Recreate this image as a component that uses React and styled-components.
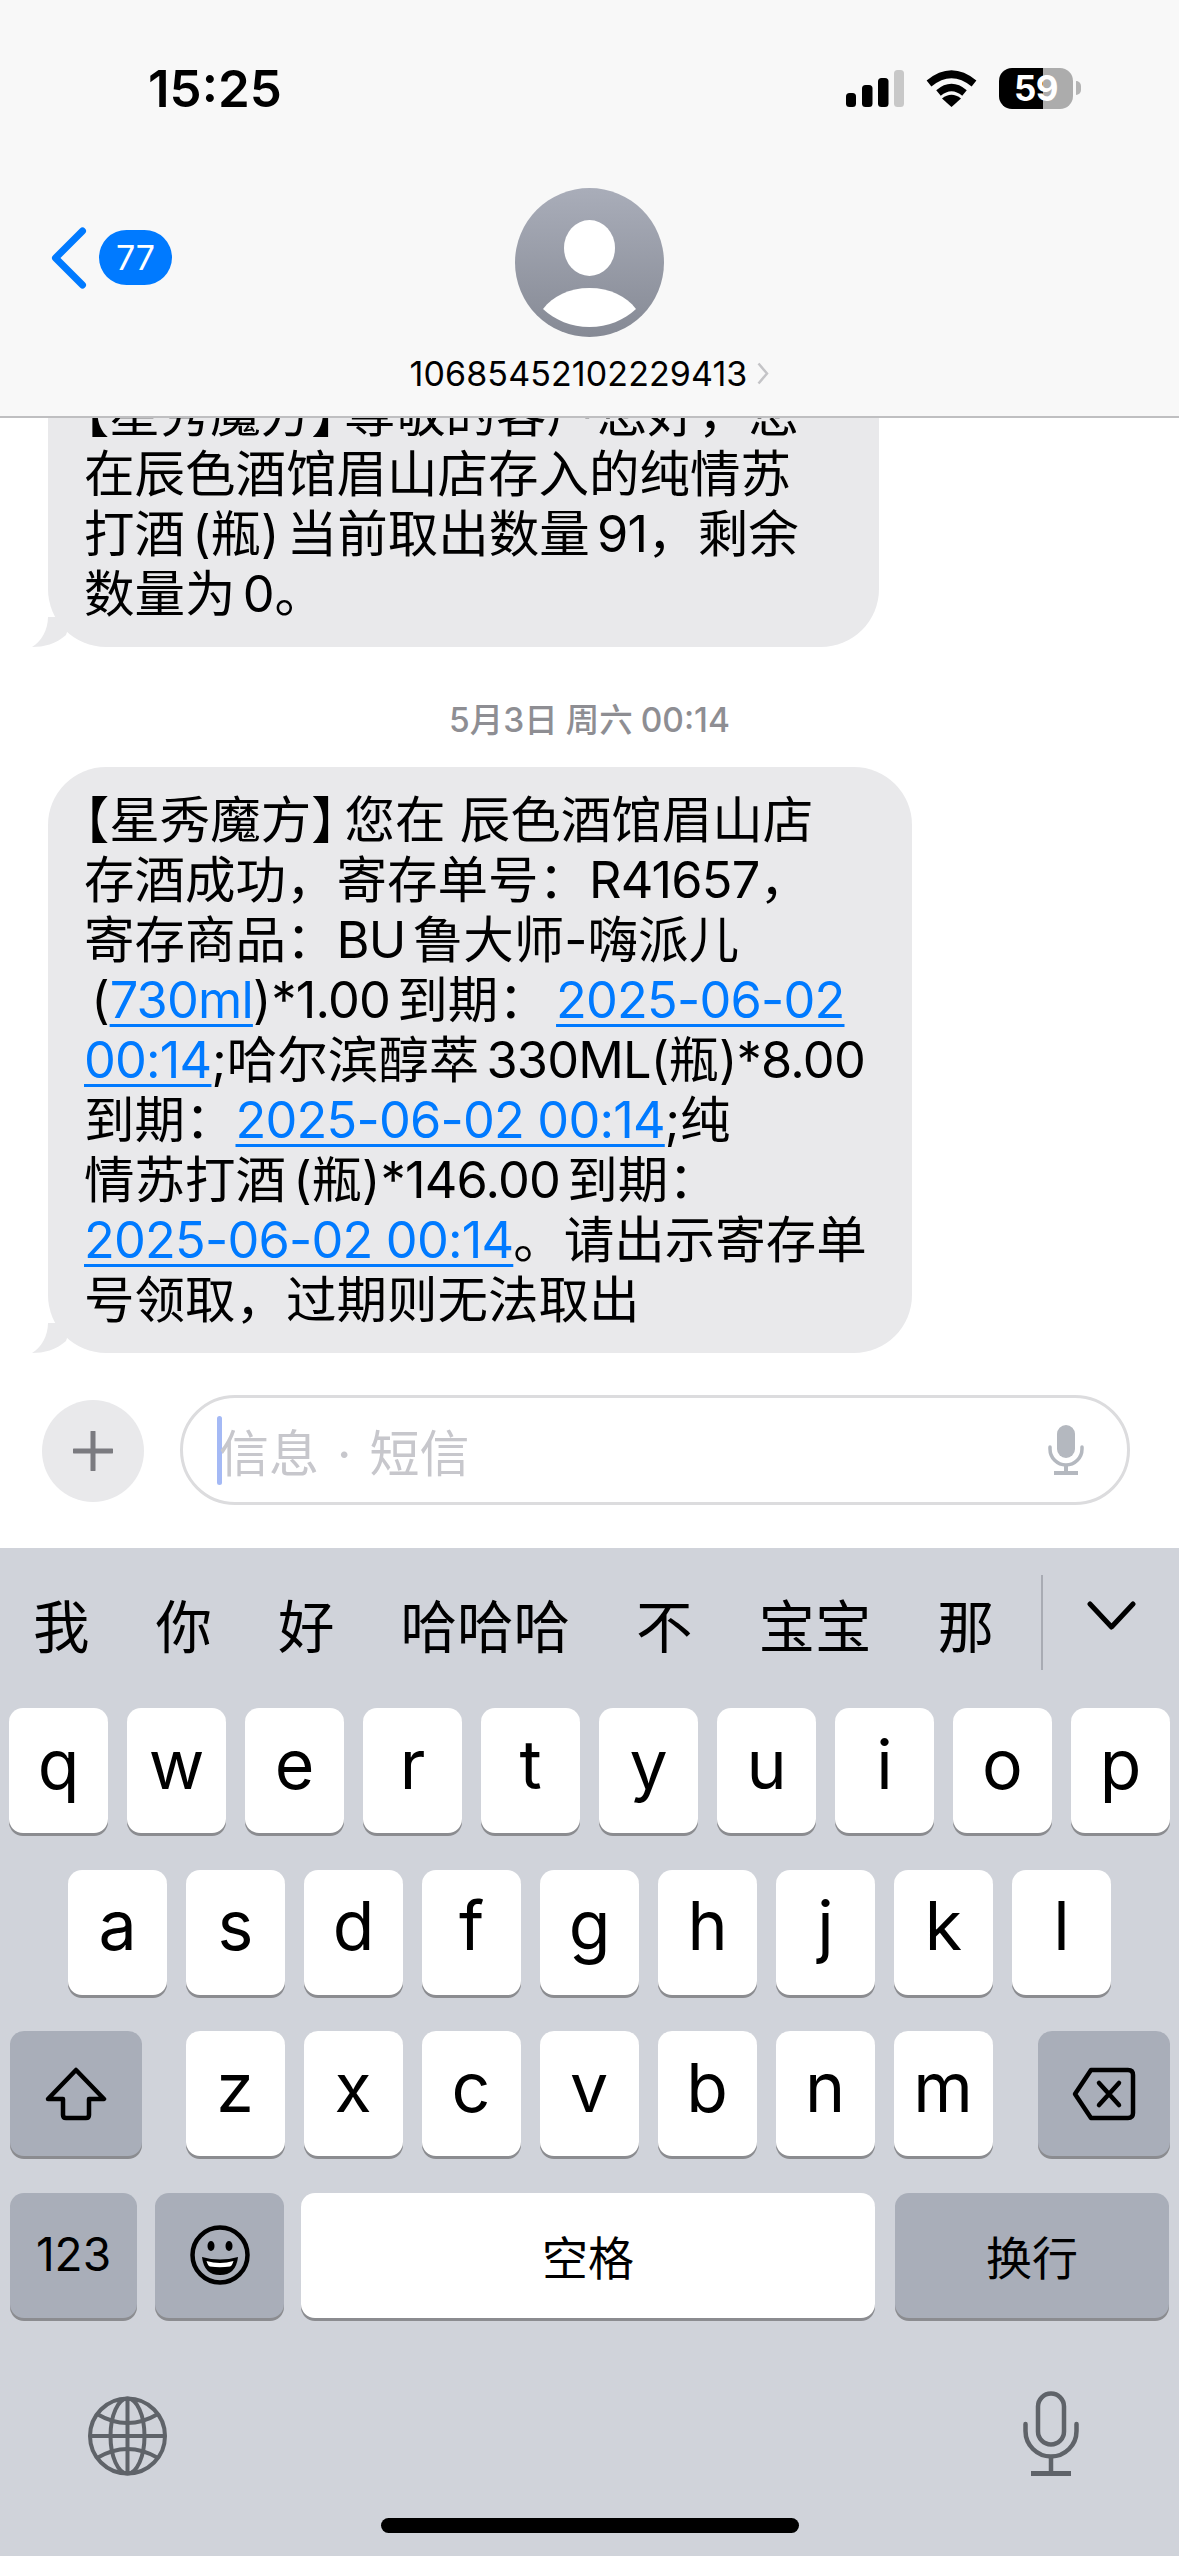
import React from 'react';
import styled, { createGlobalStyle } from 'styled-components';

const TEXT_FONT = `Inter, "Noto Sans CJK SC", sans-serif`;

const GlobalStyle = createGlobalStyle`
  html, body {
    margin: 0;
    padding: 0;
    background: #fff;
  }
  * {
    box-sizing: border-box;
  }
`;

const Page = styled.div`
  width: 1179px;
  height: 2556px;
  display: flex;
  flex-direction: column;
  overflow: hidden;
  background: #fff;
  color: #000;
  font-family: ${TEXT_FONT};
`;

const Header = styled.header`
  flex: none;
  height: 418px;
  background: #f8f8f8;
  border-bottom: 2px solid #bfbfc1;
`;

const StatusBar = styled.div`
  height: 176px;
  padding: 0 98px 0 148px;
  display: flex;
  align-items: center;
  justify-content: space-between;
`;

const Clock = styled.div`
  font-size: 51px;
  font-weight: 600;
`;

const StatusIcons = styled.div`
  display: flex;
  align-items: center;
  gap: 22px;
`;

const Battery = styled.div`
  display: flex;
  align-items: center;
`;

const BatteryBody = styled.div`
  width: 74px;
  height: 41px;
  border-radius: 13px;
  background: ${(p) => `linear-gradient(90deg, #000 ${p.$level}%, #acacac ${p.$level}%)`};
  color: #fff;
  font-size: 35px;
  font-weight: 700;
  line-height: 41px;
  text-align: center;
  letter-spacing: -0.5px;
`;

const BatteryNub = styled.div`
  width: 5px;
  height: 14px;
  margin-left: 3px;
  border-radius: 0 8px 8px 0;
  background: #b4b4b4;
`;

const Nav = styled.div`
  margin-top: 12px;
  display: grid;
  grid-template-columns: 1fr auto 1fr;
`;

const Back = styled.div`
  padding: 39px 0 0 51px;
  display: flex;
  align-items: flex-start;
  gap: 12px;
`;

const Badge = styled.div`
  width: 73px;
  height: 55px;
  margin-top: 3px;
  border-radius: 28px;
  background: #007aff;
  color: #fff;
  font-size: 34px;
  line-height: 55px;
  text-align: center;
`;

const Contact = styled.div`
  display: flex;
  flex-direction: column;
  align-items: center;
`;

const ContactName = styled.div`
  margin-top: 16px;
  height: 40px;
  display: flex;
  align-items: center;
  gap: 10px;
  font-size: 34px;
  letter-spacing: 0.1px;
`;

const Messages = styled.main`
  flex: 1;
  min-height: 0;
  overflow: hidden;
  display: flex;
  flex-direction: column;
  justify-content: flex-end;
  padding-left: 48px;
`;

const Bubble = styled.div`
  position: relative;
  flex: none;
  width: ${(p) => p.$width}px;
  padding: 23px 0 23px 36px;
  border-radius: 58px;
  background: #e9e9eb;
  font-size: 50.5px;
  line-height: 60px;
  white-space: nowrap;
  word-spacing: -7px;
`;

const Tail = styled.svg`
  position: absolute;
  left: -16px;
  bottom: 0;
  width: 40px;
  height: 30px;
`;

const Bracket = styled.span`
  font-feature-settings: 'halt';
  margin-right: ${(p) => p.$after || 0}px;
`;

const Latin = styled.span`
  letter-spacing: -0.8px;
`;

const Wide = styled.span`
  word-spacing: 0;
`;

const Link = styled.span`
  color: #007aff;
  letter-spacing: -0.8px;
  word-spacing: 0;
  text-decoration: underline;
  text-decoration-thickness: 3px;
  text-underline-offset: 6px;
`;

const Timestamp = styled.div`
  flex: none;
  height: 40px;
  margin: 53px 48px 27px 0;
  color: #8e8e93;
  font-size: 33.5px;
  font-weight: 500;
  line-height: 40px;
  text-align: center;
  word-spacing: -1px;
`;

const Composer = styled.div`
  flex: none;
  height: 195px;
  padding: 42px 49px 0 42px;
  display: flex;
  gap: 36px;
`;

const PlusButton = styled.div`
  flex: none;
  width: 102px;
  height: 102px;
  margin-top: 5px;
  border-radius: 50%;
  background: #e9e9eb;
  display: flex;
  align-items: center;
  justify-content: center;
`;

const InputBox = styled.div`
  flex: 1;
  height: 110px;
  padding: 0 43px 0 34px;
  border: 3px solid #dcdcde;
  border-radius: 55px;
  display: flex;
  align-items: center;
`;

const Caret = styled.div`
  flex: none;
  width: 5px;
  height: 69px;
  margin-right: -3px;
  border-radius: 3px;
  background: #a4b9f5;
`;

const Placeholder = styled.div`
  flex: 1;
  color: #c7c7cc;
  font-size: 50px;
  white-space: nowrap;
  word-spacing: 4px;
`;

const Keyboard = styled.section`
  flex: none;
  height: 1008px;
  background: #d0d3da;
`;

const Candidates = styled.div`
  position: relative;
  height: 160px;
  padding: 49px 0 0 33px;
  display: flex;
  gap: 66px;
  font-size: 56.5px;
  line-height: 62px;
  white-space: nowrap;
`;

const CandidateDivider = styled.div`
  position: absolute;
  left: 1041px;
  top: 27px;
  width: 2px;
  height: 95px;
  background: #a8abb3;
`;

const CandidateToggle = styled.svg`
  position: absolute;
  left: 1087px;
  top: 53px;
  width: 49px;
  height: 30px;
`;

const KeyRows = styled.div`
  display: flex;
  flex-direction: column;
  gap: 36.5px;
`;

const KeyRow = styled.div`
  height: 125px;
  display: flex;
  justify-content: center;
  gap: ${(p) => p.$gap || 19}px;
`;

const Key = styled.div`
  flex: none;
  width: ${(p) => p.$width || 99}px;
  height: 125px;
  margin: ${(p) => p.$margin || 0};
  border-radius: 14px;
  background: ${(p) => (p.$special ? '#a9aeb9' : '#fff')};
  box-shadow: 0 3px 0 #8b8c90;
  display: flex;
  align-items: center;
  justify-content: center;
  font-size: ${(p) => p.$size || 68}px;
  padding-bottom: ${(p) => p.$lift ?? 14}px;
`;

const KeyboardFooter = styled.div`
  margin-top: 73px;
  height: 85px;
  padding: 0 100px 0 88px;
  display: flex;
  align-items: flex-end;
  justify-content: space-between;
`;

const HomeBar = styled.div`
  width: 418px;
  height: 15px;
  margin: 42px auto 0;
  border-radius: 8px;
  background: #000;
`;

const SignalIcon = () => (
  <svg width="58" height="37" viewBox="0 0 58 37">
    <rect x="0" y="23" width="10" height="14" rx="3.5" fill="#000" />
    <rect x="16" y="15" width="10.5" height="22" rx="3.5" fill="#000" />
    <rect x="32" y="8" width="10.5" height="29" rx="3.5" fill="#000" />
    <rect x="48" y="0" width="10" height="37" rx="3.5" fill="#c8c8c8" />
  </svg>
);

const WifiIcon = () => (
  <svg width="51" height="37" viewBox="0 0 51 37">
    <path d="M3 13.5 Q25.5 -5 48 13.5" fill="none" stroke="#000" strokeWidth="7.5" />
    <path d="M12.5 23 Q25.5 12 38.5 23" fill="none" stroke="#000" strokeWidth="7" />
    <path d="M25.5 37 L16 28.5 Q25.5 21 35 28.5 Z" fill="#000" />
  </svg>
);

const Avatar = () => (
  <svg width="149" height="149" viewBox="0 0 149 149">
    <defs>
      <linearGradient id="avatarFill" x1="0" y1="0" x2="0" y2="1">
        <stop offset="0" stopColor="#a9adb9" />
        <stop offset="1" stopColor="#868a95" />
      </linearGradient>
    </defs>
    <circle cx="74.5" cy="74.5" r="74.5" fill="url(#avatarFill)" />
    <ellipse cx="74.5" cy="60" rx="25.5" ry="28" fill="#fff" />
    <path d="M28 121 C38 108 54 100 74.5 100 C95 100 111 108 121 121 C109 132 93 139 74.5 139 C56 139 40 132 28 121 Z" fill="#fff" />
  </svg>
);

const BackChevron = () => (
  <svg width="36" height="62" viewBox="0 0 36 62">
    <path d="M31.5 4 L4.5 31 L31.5 58" fill="none" stroke="#007aff" strokeWidth="7" strokeLinecap="round" strokeLinejoin="round" />
  </svg>
);

const NameChevron = () => (
  <svg width="12" height="23" viewBox="0 0 12 23">
    <path d="M1.5 1.5 L10 11.5 L1.5 21.5" fill="none" stroke="#c4c4c7" strokeWidth="2.5" />
  </svg>
);

const BubbleTail = () => (
  <Tail viewBox="0 0 40 30">
    <path d="M16 0 C16 13 9 25 0 30 C12 30 24 27 34 18 L40 0 Z" fill="#e9e9eb" />
  </Tail>
);

const PlusIcon = () => (
  <svg width="40" height="40" viewBox="0 0 40 40">
    <path d="M20 1 V39 M1 20 H39" stroke="#7b7b80" strokeWidth="5" strokeLinecap="round" />
  </svg>
);

const InputMic = () => (
  <svg width="36" height="50" viewBox="0 0 36 50">
    <rect x="9" y="0" width="18" height="33" rx="9" fill="#b4b8bf" />
    <path d="M2 22 V24 A16 16 0 0 0 34 24 V22" fill="none" stroke="#b4b8bf" strokeWidth="3.5" strokeLinecap="round" />
    <path d="M18 40 V47 M6 48 H30" stroke="#b4b8bf" strokeWidth="4" />
  </svg>
);

const ShiftIcon = () => (
  <svg width="62" height="54" viewBox="0 0 62 54">
    <path
      d="M31 3 L59 32 H44 V48 Q44 51 41 51 H21 Q18 51 18 48 V32 H3 Z"
      fill="none"
      stroke="#000"
      strokeWidth="4.5"
      strokeLinejoin="round"
    />
  </svg>
);

const BackspaceIcon = () => (
  <svg width="64" height="54" viewBox="0 0 64 54">
    <path
      d="M19 3 H56 Q61 3 61 8 V46 Q61 51 56 51 H19 L3 27 Z"
      fill="none"
      stroke="#000"
      strokeWidth="4.5"
      strokeLinejoin="round"
    />
    <path d="M27 16 L47 38 M47 16 L27 38" stroke="#000" strokeWidth="4.5" strokeLinecap="round" />
  </svg>
);

const EmojiIcon = () => (
  <svg width="60" height="60" viewBox="0 0 60 60">
    <circle cx="30" cy="30" r="27.5" fill="none" stroke="#000" strokeWidth="4.5" />
    <ellipse cx="21" cy="21" rx="3.5" ry="5" fill="#000" />
    <ellipse cx="39" cy="21" rx="3.5" ry="5" fill="#000" />
    <path d="M12 32 Q30 37 48 32 Q46 50 30 50 Q14 50 12 32 Z" fill="#000" />
    <path d="M16.5 36 Q30 40 43.5 36 Q42 41 40 41.5 Q30 43 20 41.5 Q18 41 16.5 36 Z" fill="#fff" />
  </svg>
);

const GlobeIcon = () => (
  <svg width="79" height="80" viewBox="0 0 79 80" fill="none" stroke="#5f6369" strokeWidth="4">
    <circle cx="39.5" cy="40" r="37.5" />
    <ellipse cx="39.5" cy="40" rx="17" ry="37.5" />
    <path d="M39.5 2.5 V77.5 M2 40 H77" />
    <path d="M9 18 Q39.5 36 70 18 M9 62 Q39.5 44 70 62" />
  </svg>
);

const DictationIcon = () => (
  <svg width="56" height="85" viewBox="0 0 56 85" fill="none" stroke="#5f6369" strokeWidth="4.5">
    <rect x="15" y="2.5" width="26" height="51" rx="13" />
    <path d="M2.5 33 V40 A25.5 25.5 0 0 0 53.5 40 V33" strokeLinecap="round" />
    <path d="M28 66 V80" />
    <path d="M8 82.5 H48" strokeWidth="5" />
  </svg>
);

const ROW_ONE = ['q', 'w', 'e', 'r', 't', 'y', 'u', 'i', 'o', 'p'];
const ROW_TWO = ['a', 's', 'd', 'f', 'g', 'h', 'j', 'k', 'l'];
const ROW_THREE = ['z', 'x', 'c', 'v', 'b', 'n', 'm'];
const CANDIDATES = ['我', '你', '好', '哈哈哈', '不', '宝宝', '那'];

export default function App() {
  return (
    <Page>
      <GlobalStyle />
      <Header>
        <StatusBar>
          <Clock>15:25</Clock>
          <StatusIcons>
            <SignalIcon />
            <WifiIcon />
            <Battery>
              <BatteryBody $level={59.5}>59</BatteryBody>
              <BatteryNub />
            </Battery>
          </StatusIcons>
        </StatusBar>
        <Nav>
          <Back>
            <BackChevron />
            <Badge>77</Badge>
          </Back>
          <Contact>
            <Avatar />
            <ContactName>
              10685452102229413
              <NameChevron />
            </ContactName>
          </Contact>
        </Nav>
      </Header>

      <Messages>
        <Bubble $width={831}>
          <Bracket>【</Bracket>星秀魔方<Bracket $after={8}>】</Bracket>尊敬的客户您好，您
          <br />
          在辰色酒馆眉山店存入的纯情苏
          <br />
          打酒 (瓶) 当前取出数量 <Latin>91</Latin>，剩余
          <br />
          数量为 0。
          <BubbleTail />
        </Bubble>
        <Timestamp>5月3日 周六 00:14</Timestamp>
        <Bubble $width={864}>
          <Bracket>【</Bracket>星秀魔方<Bracket $after={8}>】</Bracket>您在<Wide> </Wide>辰色酒馆眉山店
          <br />
          存酒成功，寄存单号：<Latin>R41657</Latin>，
          <br />
          寄存商品：<Latin>BU</Latin> 鲁大师-嗨派儿
          <br />
          &nbsp;(<Link>730ml</Link>)<Latin>*1.00</Latin> 到期： <Link>2025-06-02</Link>
          <br />
          <Link>00:14</Link>;哈尔滨醇萃 <Latin>330ML(</Latin>瓶<Latin>)*8.00</Latin>
          <br />
          到期：<Link>2025-06-02 00:14</Link>;纯
          <br />
          情苏打酒 (瓶)<Latin>*146.00</Latin> 到期：
          <br />
          <Link>2025-06-02 00:14</Link>。请出示寄存单
          <br />
          号领取，过期则无法取出
          <BubbleTail />
        </Bubble>
      </Messages>

      <Composer>
        <PlusButton>
          <PlusIcon />
        </PlusButton>
        <InputBox>
          <Caret />
          <Placeholder>信息 · 短信</Placeholder>
          <InputMic />
        </InputBox>
      </Composer>

      <Keyboard>
        <Candidates>
          {CANDIDATES.map((word) => (
            <span key={word}>{word}</span>
          ))}
          <CandidateDivider />
          <CandidateToggle viewBox="0 0 49 30">
            <path d="M3 3 L24.5 26 L46 3" fill="none" stroke="#000" strokeWidth="5" strokeLinecap="round" strokeLinejoin="round" />
          </CandidateToggle>
        </Candidates>
        <KeyRows>
          <KeyRow>
            {ROW_ONE.map((letter) => (
              <Key key={letter}>{letter}</Key>
            ))}
          </KeyRow>
          <KeyRow>
            {ROW_TWO.map((letter) => (
              <Key key={letter}>{letter}</Key>
            ))}
          </KeyRow>
          <KeyRow>
            <Key $special $width={132} $margin="0 25px 0 0" $lift={0}>
              <ShiftIcon />
            </Key>
            {ROW_THREE.map((letter) => (
              <Key key={letter}>{letter}</Key>
            ))}
            <Key $special $width={132} $margin="0 0 0 26px" $lift={0}>
              <BackspaceIcon />
            </Key>
          </KeyRow>
          <KeyRow $gap={18}>
            <Key $special $width={127} $size={46} $lift={2}>
              123
            </Key>
            <Key $special $width={129} $lift={0}>
              <EmojiIcon />
            </Key>
            <Key $width={574} $size={46} $lift={0} $margin="0 2px 0 -1px">
              空格
            </Key>
            <Key $special $width={274} $size={46} $lift={0}>
              换行
            </Key>
          </KeyRow>
        </KeyRows>
        <KeyboardFooter>
          <GlobeIcon />
          <DictationIcon />
        </KeyboardFooter>
        <HomeBar />
      </Keyboard>
    </Page>
  );
}
